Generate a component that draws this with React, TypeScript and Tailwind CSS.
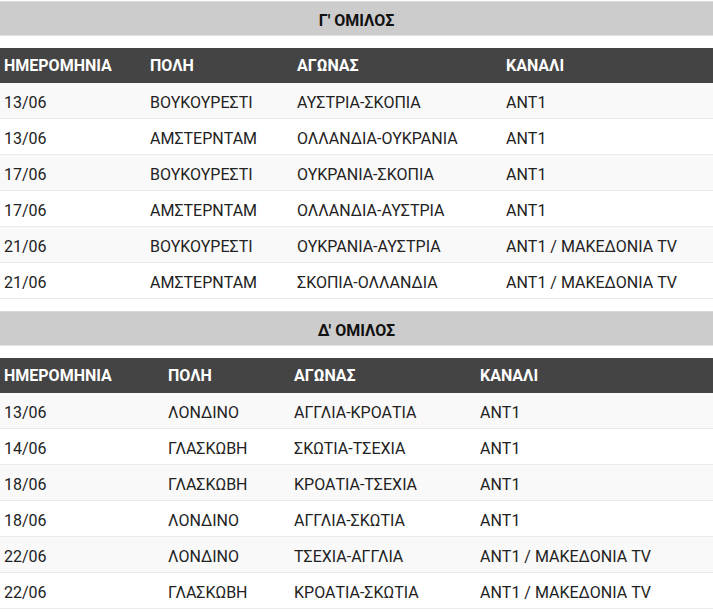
import React from 'react'

type Row = [string, string, string, string]

interface Group {
  title: string
  cols: string[] // column widths
  rows: Row[]
}

const HEAD: Row = ['ΗΜΕΡΟΜΗΝΙΑ', 'ΠΟΛΗ', 'ΑΓΩΝΑΣ', 'ΚΑΝΑΛΙ']

const GROUPS: Group[] = [
  {
    title: "Γ' ΟΜΙΛΟΣ",
    cols: ['w-[146px]', 'w-[147px]', 'w-[209px]', 'flex-1'],
    rows: [
      ['13/06', 'ΒΟΥΚΟΥΡΕΣΤΙ', 'ΑΥΣΤΡΙΑ-ΣΚΟΠΙΑ', 'ΑΝΤ1'],
      ['13/06', 'ΑΜΣΤΕΡΝΤΑΜ', 'ΟΛΛΑΝΔΙΑ-ΟΥΚΡΑΝΙΑ', 'ΑΝΤ1'],
      ['17/06', 'ΒΟΥΚΟΥΡΕΣΤΙ', 'ΟΥΚΡΑΝΙΑ-ΣΚΟΠΙΑ', 'ΑΝΤ1'],
      ['17/06', 'ΑΜΣΤΕΡΝΤΑΜ', 'ΟΛΛΑΝΔΙΑ-ΑΥΣΤΡΙΑ', 'ΑΝΤ1'],
      ['21/06', 'ΒΟΥΚΟΥΡΕΣΤΙ', 'ΟΥΚΡΑΝΙΑ-ΑΥΣΤΡΙΑ', 'ΑΝΤ1 / ΜΑΚΕΔΟΝΙΑ TV'],
      ['21/06', 'ΑΜΣΤΕΡΝΤΑΜ', 'ΣΚΟΠΙΑ-ΟΛΛΑΝΔΙΑ', 'ΑΝΤ1 / ΜΑΚΕΔΟΝΙΑ TV'],
    ],
  },
  {
    title: "Δ' ΟΜΙΛΟΣ",
    cols: ['w-[164px]', 'w-[126px]', 'w-[186px]', 'flex-1'],
    rows: [
      ['13/06', 'ΛΟΝΔΙΝΟ', 'ΑΓΓΛΙΑ-ΚΡΟΑΤΙΑ', 'ΑΝΤ1'],
      ['14/06', 'ΓΛΑΣΚΩΒΗ', 'ΣΚΩΤΙΑ-ΤΣΕΧΙΑ', 'ΑΝΤ1'],
      ['18/06', 'ΓΛΑΣΚΩΒΗ', 'ΚΡΟΑΤΙΑ-ΤΣΕΧΙΑ', 'ΑΝΤ1'],
      ['18/06', 'ΛΟΝΔΙΝΟ', 'ΑΓΓΛΙΑ-ΣΚΩΤΙΑ', 'ΑΝΤ1'],
      ['22/06', 'ΛΟΝΔΙΝΟ', 'ΤΣΕΧΙΑ-ΑΓΓΛΙΑ', 'ΑΝΤ1 / ΜΑΚΕΔΟΝΙΑ TV'],
      ['22/06', 'ΓΛΑΣΚΩΒΗ', 'ΚΡΟΑΤΙΑ-ΣΚΩΤΙΑ', 'ΑΝΤ1 / ΜΑΚΕΔΟΝΙΑ TV'],
    ],
  },
]

function GroupTable({ group }: { group: Group }) {
  return (
    <div>
      {/* Όμιλος */}
      <div className="h-[35px] pt-1 bg-[#cccccc] border-t border-[#d9d9d9] border-b border-b-[#e2e2e2] flex items-center justify-center text-[16px] font-bold text-[#111]">
        {group.title}
      </div>

      <div className="mt-3">
        <div className="h-[35px] pt-px bg-[#444444] flex items-center text-white font-bold text-[16px]">
          {HEAD.map((h, i) => (
            <div key={h} className={`${group.cols[i]} pl-1`}>{h}</div>
          ))}
        </div>
        {group.rows.map((r, ri) => (
          <div
            key={ri}
            className={`h-[36px] pt-1 flex items-center border-b border-[#ebebeb] text-[16px] text-[#222] ${ri % 2 === 0 ? 'bg-[#f9f9f9]' : 'bg-white'}`}
          >
            {r.map((c, ci) => (
              <div key={ci} className={`${group.cols[ci]} pl-1 whitespace-nowrap`}>{c}</div>
            ))}
          </div>
        ))}
      </div>
    </div>
  )
}

export default function App() {
  return (
    <div className="w-[713px] h-[613px] bg-white pt-px flex flex-col gap-3 font-['Roboto',sans-serif] overflow-hidden">
      {GROUPS.map((g) => (
        <GroupTable key={g.title} group={g} />
      ))}
    </div>
  )
}
